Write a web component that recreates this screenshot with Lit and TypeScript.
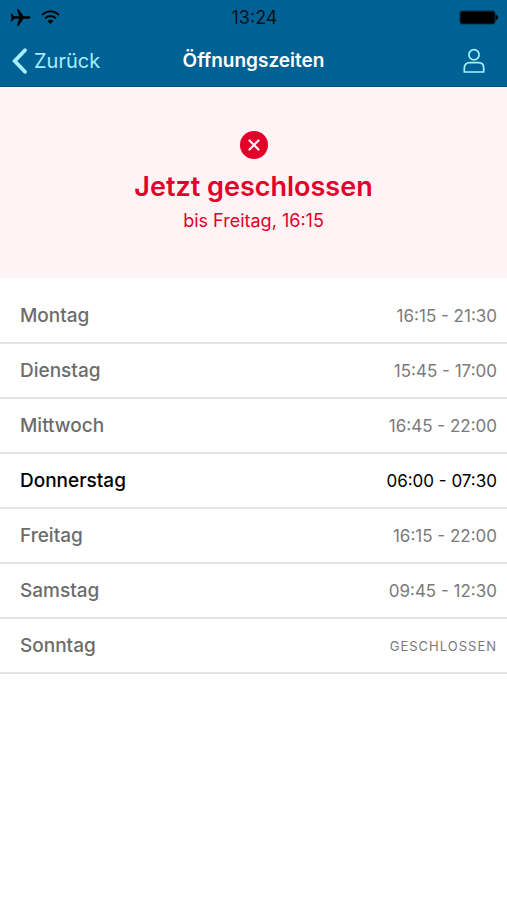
import { LitElement, html, css } from "lit";
import { customElement, property } from "lit/decorators.js";

interface Day {
  name: string;
  hours: string | null;
  today?: boolean;
}

const WEEK: Day[] = [
  { name: "Montag", hours: "16:15 - 21:30" },
  { name: "Dienstag", hours: "15:45 - 17:00" },
  { name: "Mittwoch", hours: "16:45 - 22:00" },
  { name: "Donnerstag", hours: "06:00 - 07:30", today: true },
  { name: "Freitag", hours: "16:15 - 22:00" },
  { name: "Samstag", hours: "09:45 - 12:30" },
  { name: "Sonntag", hours: null },
];

@customElement("status-bar")
export class StatusBar extends LitElement {
  static styles = css`
    :host {
      display: grid;
      grid-template-columns: 1fr auto 1fr;
      align-items: center;
      height: 35px;
      padding: 0 8px 0 10px;
      color: #06121c;
      font-size: 18px;
      line-height: 20px;
    }
    .signals {
      display: flex;
      align-items: center;
      gap: 10px;
    }
    .battery {
      justify-self: end;
    }
    svg {
      display: block;
    }
  `;

  render() {
    return html`
      <div class="signals">
        <svg width="21" height="18" viewBox="0 0 21 18" fill="#000" role="img" aria-label="Flugmodus">
          <path d="M20.500 8.500c0-.8-.9-1.300-2.200-1.300h-4.800L8.600.300H6.700l2.600 6.900H4L2.200 4.700H.7L1.700 8.500 .7 12.300h1.500L4 9.800h5.300l-2.600 6.900h1.900l4.900-6.900h4.800c1.300 0 2.200-.5 2.200-1.300z" />
        </svg>
        <svg width="19" height="15" viewBox="0 0 19 15" fill="none" stroke="#000" stroke-width="1.800" role="img" aria-label="WLAN">
          <path d="M1 5.200C5.800.100 13.200.100 18 5.200" />
          <path d="M4 8.400c3.200-3.200 7.800-3.200 11 0" />
          <path d="M6.600 11.100c1.700-1.700 4.100-1.700 5.800 0L9.500 14z" fill="#000" stroke="none" />
        </svg>
      </div>
      <time>13:24</time>
      <svg class="battery" width="40" height="16" viewBox="0 0 40 16" role="img" aria-label="Batterie">
        <rect x="1" y="1" width="35" height="13" rx="2" fill="#000" stroke="#04304f" />
        <path d="M36.500 4.800c1.600.3 2.500 1.400 2.500 2.800s-.9 2.500-2.500 2.800z" fill="#000" />
      </svg>
    `;
  }
}

@customElement("nav-bar")
export class NavBar extends LitElement {
  @property() heading = "";

  static styles = css`
    :host {
      display: grid;
      grid-template-columns: 1fr auto 1fr;
      align-items: center;
      height: 51px;
      padding: 0 11px;
    }
    h1 {
      margin: 0;
      font-size: 19px;
      line-height: 24px;
      font-weight: 600;
      color: #fff;
    }
    button {
      display: flex;
      align-items: center;
      gap: 6px;
      margin: 0;
      padding: 0;
      border: 0;
      background: none;
      color: #a5efff;
      font: inherit;
      font-size: 20px;
      line-height: 24px;
      cursor: pointer;
    }
    .account {
      justify-self: end;
      padding: 0 9px;
    }
    svg {
      display: block;
    }
  `;

  render() {
    return html`
      <button type="button">
        <svg width="17" height="28" viewBox="0 0 17 28" fill="none" stroke="currentColor" stroke-width="3.800" stroke-linecap="round" stroke-linejoin="miter" aria-hidden="true">
          <path d="M14 3.200 3.700 14 14 24.800" />
        </svg>
        Zurück
      </button>
      <h1>${this.heading}</h1>
      <button class="account" type="button" aria-label="Konto">
        <svg width="26" height="28" viewBox="0 0 26 28" fill="none" stroke="currentColor" stroke-width="1.700" stroke-linejoin="round" aria-hidden="true">
          <circle cx="13" cy="7.700" r="5.100" />
          <path d="M3.300 25v-4c0-3.400 2.100-5.300 5.200-5.300h9c3.100 0 5.200 1.900 5.200 5.300v4z" />
        </svg>
      </button>
    `;
  }
}

@customElement("opening-status")
export class OpeningStatus extends LitElement {
  static styles = css`
    :host {
      display: flex;
      flex-direction: column;
      align-items: center;
      padding: 44px 16px 45px;
      background: #fff3f5;
      color: #e2002b;
      text-align: center;
    }
    h2 {
      margin: 10px 0 4px;
      font-size: 27px;
      line-height: 36px;
      font-weight: 600;
    }
    p {
      margin: 0;
      font-size: 18px;
      line-height: 24px;
    }
    svg {
      display: block;
    }
  `;

  render() {
    return html`
      <svg width="28" height="28" viewBox="0 0 28 28" aria-hidden="true">
        <circle cx="14" cy="14" r="14" fill="#e2002b" />
        <path d="m9.500 9.500 9 9m0-9-9 9" stroke="#fff3f5" stroke-width="2.200" stroke-linecap="round" />
      </svg>
      <h2>Jetzt geschlossen</h2>
      <p>bis Freitag, 16:15</p>
    `;
  }
}

@customElement("opening-hours")
export class OpeningHours extends LitElement {
  @property({ attribute: false }) days: Day[] = [];

  static styles = css`
    :host {
      display: block;
      padding-top: 11px;
    }
    table {
      width: 100%;
      border-collapse: separate;
      border-spacing: 0;
    }
    th,
    td {
      height: 53px;
      padding: 0;
      border-bottom: 2px solid #e4e4e4;
      vertical-align: middle;
      font-weight: 400;
      line-height: 24px;
    }
    th {
      padding-left: 20px;
      text-align: left;
      font-size: 19px;
      font-weight: 500;
      color: #6c6c6c;
    }
    td {
      padding-right: 10px;
      text-align: right;
      font-size: 17px;
      color: #7a7a7a;
    }
    .today th,
    .today td {
      color: #000;
    }
    .closed {
      font-size: 13px;
      letter-spacing: 1px;
      text-transform: uppercase;
    }
  `;

  render() {
    return html`
      <table aria-label="Öffnungszeiten">
        <tbody>
          ${this.days.map(
            (day) => html`
              <tr class=${day.today ? "today" : ""}>
                <th scope="row">${day.name}</th>
                <td class=${day.hours ? "" : "closed"}>${day.hours ?? "Geschlossen"}</td>
              </tr>
            `,
          )}
        </tbody>
      </table>
    `;
  }
}

@customElement("app-root")
export class AppRoot extends LitElement {
  static styles = css`
    :host {
      display: block;
      min-height: 100vh;
      background: #fff;
      font-family: Inter, "Liberation Sans", sans-serif;
    }
    header {
      background: #006194;
      border-bottom: 1px solid #00507c;
    }
  `;

  render() {
    return html`
      <header>
        <status-bar></status-bar>
        <nav-bar heading="Öffnungszeiten"></nav-bar>
      </header>
      <main>
        <opening-status></opening-status>
        <opening-hours .days=${WEEK}></opening-hours>
      </main>
    `;
  }
}
